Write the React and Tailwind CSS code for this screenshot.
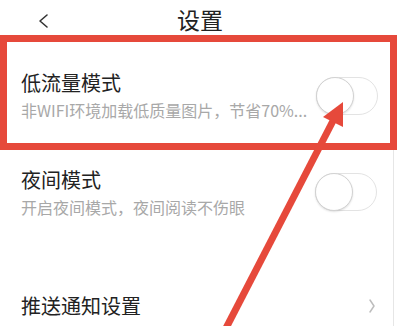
import React from 'react';

const font = { fontFamily: '"Noto Sans CJK SC", "Noto Sans", sans-serif' };

const Toggle = () => (
  <div className="relative w-[62px] h-[38px] rounded-full border border-[#e3e3e3] bg-white shrink-0">
    <div className="absolute -left-px -top-px w-[38px] h-[38px] rounded-full bg-white border border-[#d2d2d2] shadow-[0_1px_2px_rgba(0,0,0,0.12)]" />
  </div>
);

const App = () => {
  return (
    <div className="relative w-[400px] h-[326px] overflow-hidden bg-white" style={font}>
      {/* Header */}
      <header className="relative h-[35px] flex items-center justify-center">
        <svg className="absolute left-[36px] top-[12px]" width="14" height="18" viewBox="0 0 14 18">
          <polyline points="11,3 4,9 11,15" fill="none" stroke="#333" strokeWidth="1.6" strokeLinecap="round" strokeLinejoin="round" />
        </svg>
        <h1 className="text-[23px] leading-none text-[#222] pt-[3px]">设置</h1>
      </header>

      {/* 低流量模式 (highlighted) */}
      <div className="w-[397px] h-[115px] border-[7px] border-[#e6493b] pl-[14px] pr-[12px] pt-[6px] flex items-center justify-between">
        <div>
          <div className="text-[20px] leading-[28px] text-[#222]">低流量模式</div>
          <div className="text-[16px] leading-[24px] text-[#a8a8a8] mt-[1px]">非WIFI环境加载低质量图片，节省70%...</div>
        </div>
        <Toggle />
      </div>

      <div className="w-[394px] border-r border-[#e6e6e6]">
        {/* 夜间模式 */}
        <div className="h-[84px] pl-[21px] pr-[16px] flex items-center justify-between">
          <div>
            <div className="text-[20px] leading-[28px] text-[#222]">夜间模式</div>
            <div className="text-[16px] leading-[24px] text-[#a8a8a8] mt-[1px]">开启夜间模式，夜间阅读不伤眼</div>
          </div>
          <Toggle />
        </div>

        {/* 推送通知设置 */}
        <div className="mt-[44px] h-[56px] pl-[21px] pr-[17px] flex items-center justify-between">
          <div className="text-[20px] leading-[28px] text-[#222]">推送通知设置</div>
          <svg width="8" height="16" viewBox="0 0 8 16">
            <polyline points="2,2 6,8 2,14" fill="none" stroke="#bdbdbd" strokeWidth="1.5" strokeLinecap="round" strokeLinejoin="round" />
          </svg>
        </div>
      </div>

      {/* Annotation arrow */}
      <svg className="absolute inset-0 pointer-events-none" width="400" height="326" viewBox="0 0 400 326">
        <line x1="224" y1="332" x2="335" y2="117" stroke="#e6493b" strokeWidth="7" />
        <polygon points="343,102 323,117 343,127" fill="#e6493b" />
      </svg>
    </div>
  );
};

export default App;
